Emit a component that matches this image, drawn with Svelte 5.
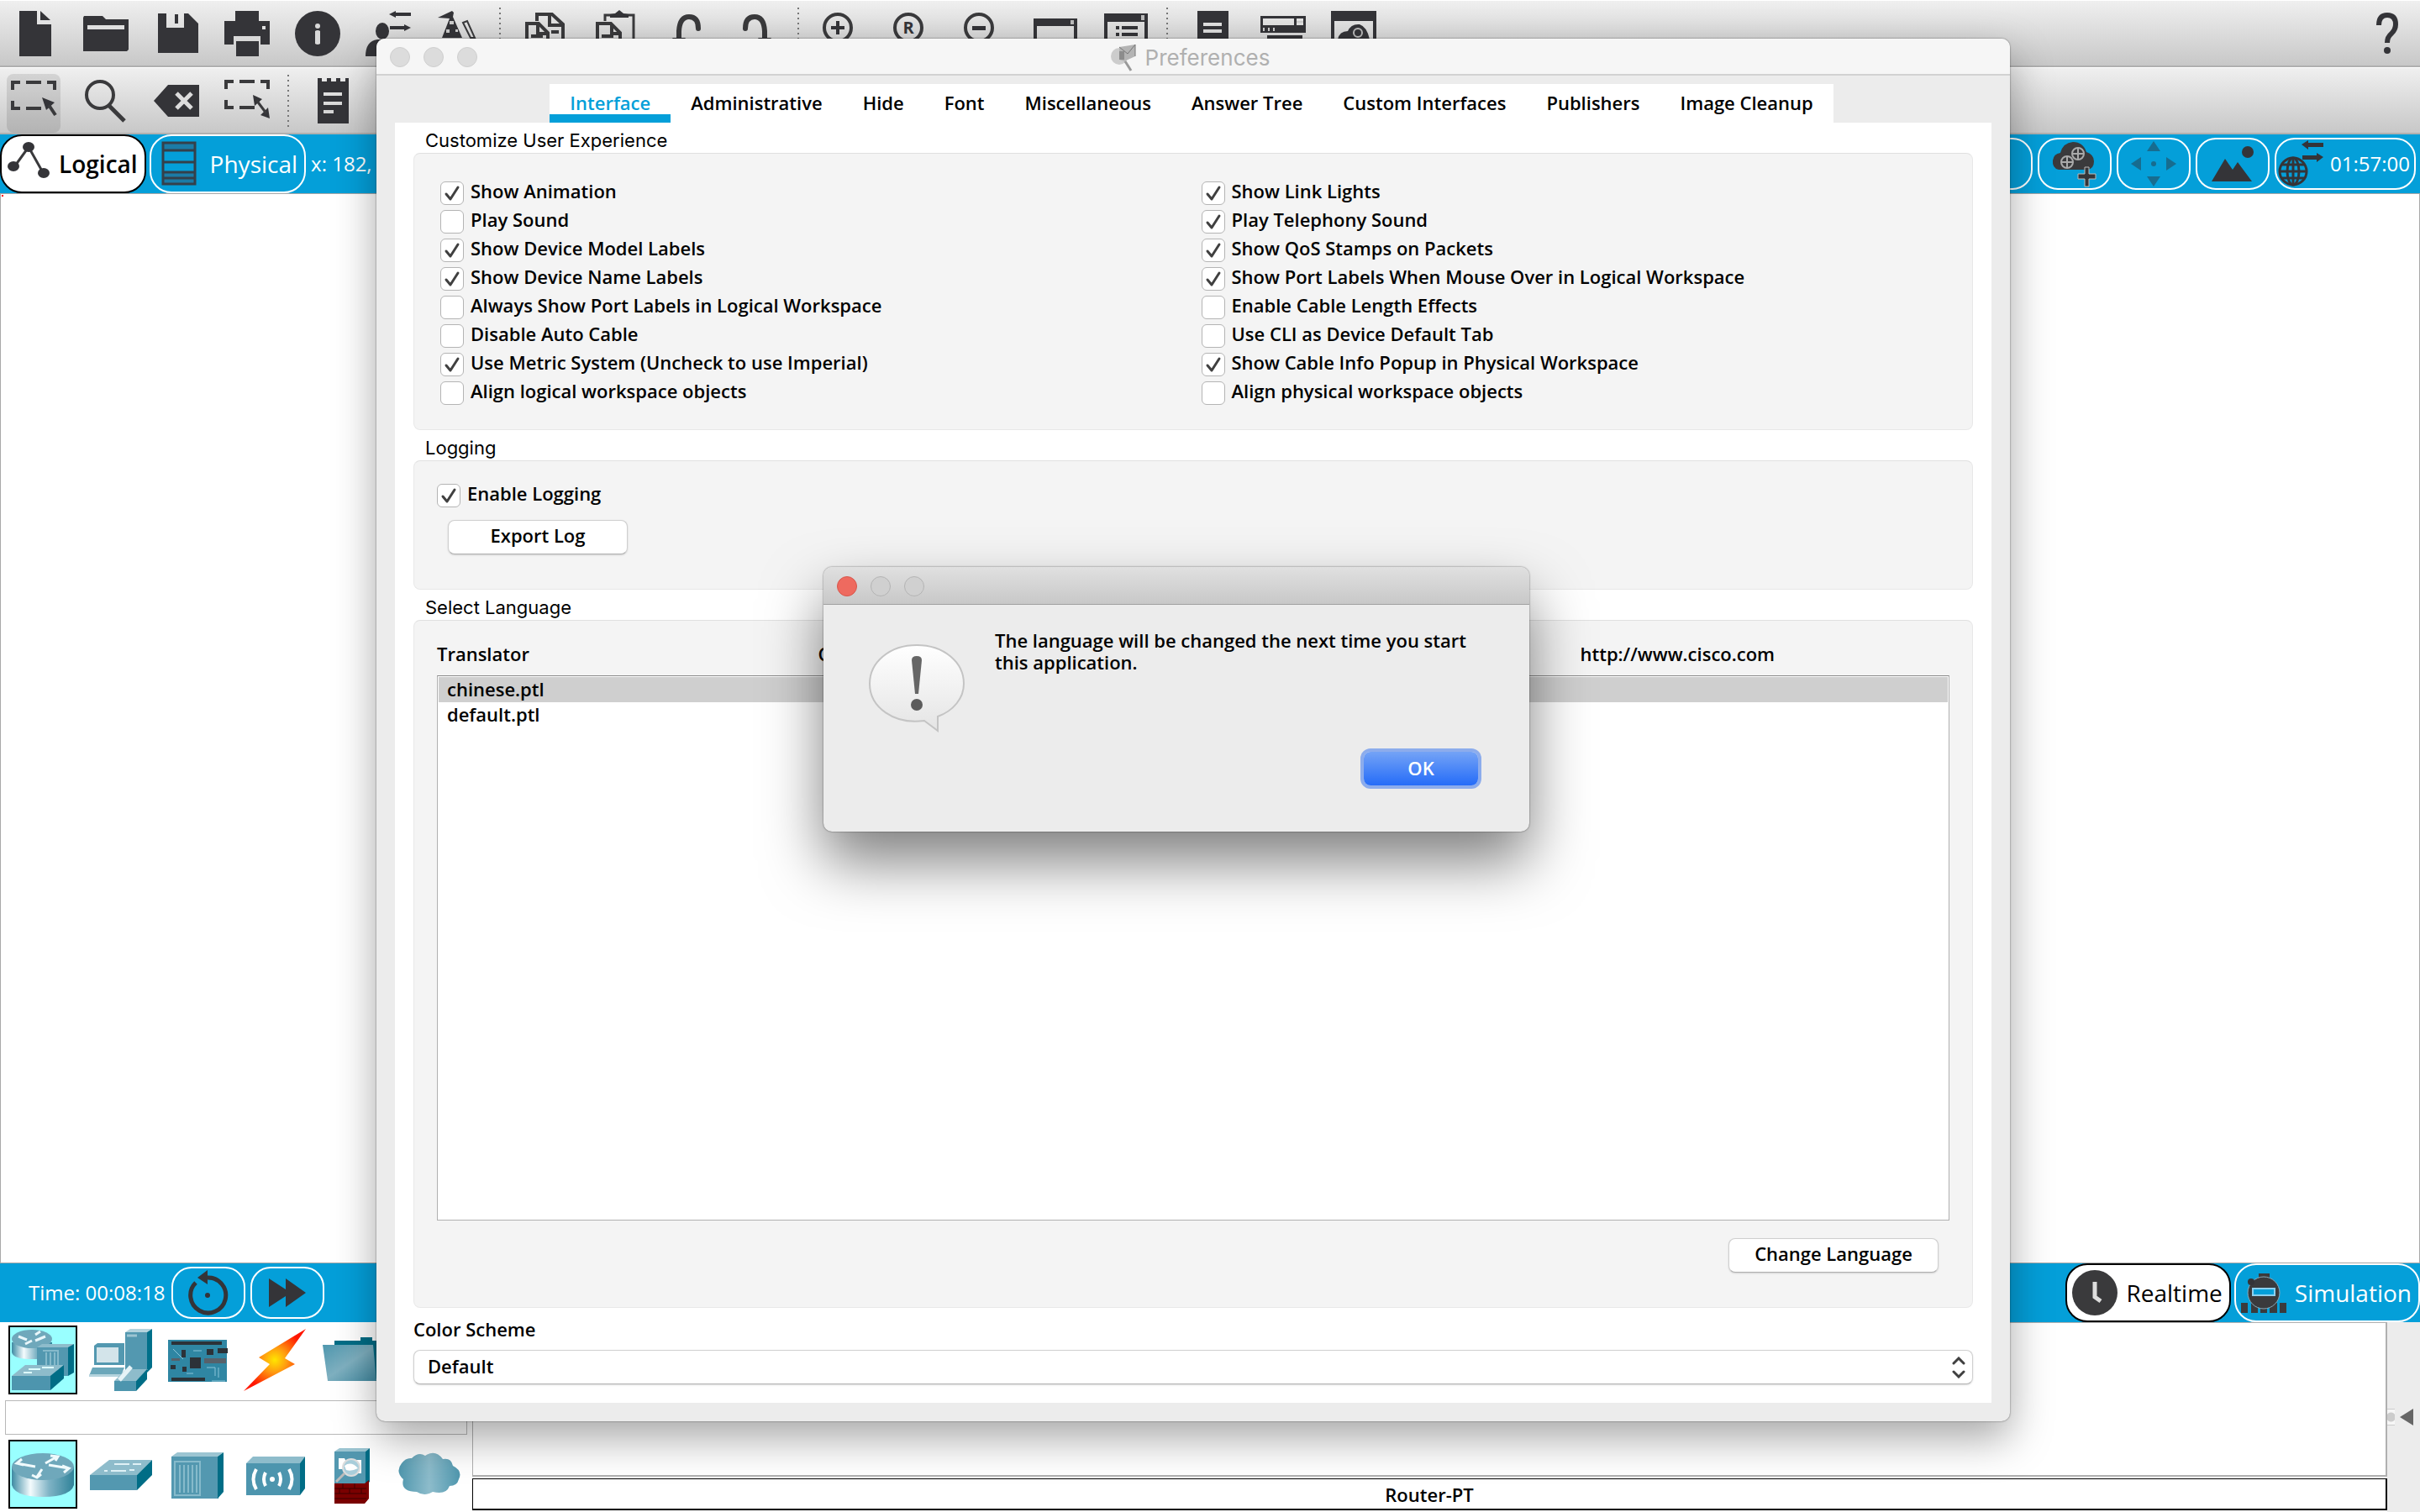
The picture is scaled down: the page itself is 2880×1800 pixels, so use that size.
<script>
	// toolbar icons, all on a 54 x 54 grid
	const icons = {
		file: '<path d="M8 0h21v16h17v38H8z"/><path d="M33 0l12 11H33z"/>',
		folder: '<path d="M0 8l1-2h22l4 4h27v36l-2 2H0zM5 17v5h44v-5z" fill-rule="evenodd"/>',
		save: '<path d="M5 3h10v17h21V3h5l12 12v35H5zM25 4h4v11h-4z"/>',
		print:
			'<path d="M13 0h28v12h13v28H43V30H11v10H0V12h13zM45 18v4h4v-4z" fill-rule="evenodd"/><path d="M14 36h27v18H14z"/>',
		info: '<circle cx="27" cy="27" r="27"/><g fill="#d8d8d8"><circle cx="27" cy="18" r="3"/><path d="M24 24q3-2 6 0v15q-3 2-6 0z"/></g>',
		users:
			'<ellipse cx="20" cy="24" rx="8" ry="10"/><path d="M0 54q0-18 14-20h12q14 2 14 20z"/><path d="M28 4l8-4v2h18v4H36v2zM54 20l-8-4v2H29v4h17v2z"/>',
		wizard:
			'<path d="M2 8l17-8 2 2-1 5 11 25H7l9-23z"/><path d="M16 12h5v4h-5zM12 22h4v4h-4zM23 22h3v3h-3z" fill="#ccc"/><path d="M32 14l5-2 9 20h-5z" fill="none" stroke="#3a3a3c" stroke-width="2"/>',
		copy: '<g fill="none" stroke="#3a3a3c" stroke-width="4"><path d="M17 12V4h18l13 12v26H30M32 4v13h14"/><path d="M5 50V15h14l11 11v24zM18 16v11h11M10 30h14M34 25h9"/></g>',
		paste:
			'<g fill="none" stroke="#3a3a3c" stroke-width="3"><path d="M14 12V5h34v40H34"/><path d="M5 50V15h16l11 11v24zM22 16v11h10M10 30h14" stroke-width="4"/></g><path d="M20 8V4l6-1 5-4 5 4 6 1v4z"/>',
		undo: '<path d="M18 44V24q1-17 12-17 11 0 11 14" fill="none" stroke="#3a3a3c" stroke-width="6" stroke-linecap="round"/><path d="M10 32h16l-8 12z"/>',
		redo: '<path d="M36 44V24Q35 7 24 7 13 7 13 21" fill="none" stroke="#3a3a3c" stroke-width="6" stroke-linecap="round"/><path d="M28 32h16l-8 12z"/>',
		zoomIn:
			'<circle cx="20" cy="20" r="16" fill="none" stroke="#3a3a3c" stroke-width="4"/><path d="M12 18h6v-6h4v6h6v4h-6v6h-4v-6h-6z"/>',
		zoomReset:
			'<circle cx="20" cy="20" r="16" fill="none" stroke="#3a3a3c" stroke-width="4"/><text x="20" y="27" font-size="20" font-weight="700" text-anchor="middle">R</text>',
		zoomOut:
			'<circle cx="20" cy="20" r="16" fill="none" stroke="#3a3a3c" stroke-width="4"/><path d="M12 18h16v5H12z"/>',
		window:
			'<path d="M1 9h52v40H1zM5 18v27h44V18z" fill-rule="evenodd"/><path d="M45 11h4v5h-4z" fill="#bbb"/>',
		list: '<path d="M1 3h52v47H1zM5 13v33h44V13z" fill-rule="evenodd"/><path d="M45 5h4v6h-4z" fill="#bbb"/><path d="M15 18h4v4h-4zM22 18h19v4H22zM15 26h4v4h-4zM22 26h19v4H22z"/>',
		note: '<path d="M9 0h37v54H9zM16 14v4h22v-4zM16 22v4h22v-4z" fill-rule="evenodd"/>',
		rack: '<path d="M0 6h54v20H0zM3 9v8h37V9zM43 9v8h8V9z" fill-rule="evenodd"/><path d="M3 20h2v4H3zM9 20h2v4H9zM15 20h2v4h-2zM43 12h8v2h-8z" fill="#ccc"/><path d="M8 29h42v8H8z"/>',
		picture:
			'<path d="M0 0h54v50H0zM4 12v34h46V12z" fill-rule="evenodd"/><path d="M8 34q2-10 12-10 4-9 14-8 9 3 12 18z"/><circle cx="32" cy="26" r="5" fill="none" stroke="#bbb" stroke-width="2"/>',
		select:
			'<path d="M2 13V4h9M18 4h18M43 4h9v9M2 26v9h9M18 35h18" fill="none" stroke="#3a3a3c" stroke-width="4"/><path d="M37 22l15 6-10 9z"/><path d="M45 31l8 12" stroke="#3a3a3c" stroke-width="4"/>',
		search:
			'<circle cx="20" cy="20" r="16" fill="none" stroke="#3a3a3c" stroke-width="4"/><path d="M31 33l18 18" stroke="#3a3a3c" stroke-width="5"/>',
		erase:
			'<path d="M0 27L17 8h37v38H17z"/><path d="M27 18l18 18M45 18L27 36" stroke="#dcdcdc" stroke-width="5"/>',
		resize:
			'<path d="M2 13V4h9M18 4h18M43 4h9v9M2 26v9h9M18 35h18" fill="none" stroke="#3a3a3c" stroke-width="4"/><path d="M34 20l11 5-9 8zM54 48l-11-4 9-9z"/><path d="M38 26l12 16" stroke="#3a3a3c" stroke-width="3"/>',
		clipboard:
			'<path d="M8 0h5v4h6V0h5v4h6V0h5v4h6V0h4v54H8zM15 17v4h22v-4zM15 28v4h22v-4zM15 38v4h12v-4z" fill-rule="evenodd"/>'
	};

	const mainTools = [
		['file', 'folder', 'save', 'print', 'info', 'users', 'wizard'],
		['copy', 'paste', 'undo', 'redo'],
		['zoomIn', 'zoomReset', 'zoomOut', 'window', 'list'],
		['note', 'rack', 'picture']
	];
	const editTools = [['select', 'search', 'erase', 'resize'], ['clipboard']];

	const tabs = [
		'Interface',
		'Administrative',
		'Hide',
		'Font',
		'Miscellaneous',
		'Answer Tree',
		'Custom Interfaces',
		'Publishers',
		'Image Cleanup'
	];
	let currentTab = $state('Interface');

	let options = $state([
		{ label: 'Show Animation', on: true },
		{ label: 'Show Link Lights', on: true },
		{ label: 'Play Sound', on: false },
		{ label: 'Play Telephony Sound', on: true },
		{ label: 'Show Device Model Labels', on: true },
		{ label: 'Show QoS Stamps on Packets', on: true },
		{ label: 'Show Device Name Labels', on: true },
		{ label: 'Show Port Labels When Mouse Over in Logical Workspace', on: true },
		{ label: 'Always Show Port Labels in Logical Workspace', on: false },
		{ label: 'Enable Cable Length Effects', on: false },
		{ label: 'Disable Auto Cable', on: false },
		{ label: 'Use CLI as Device Default Tab', on: false },
		{ label: 'Use Metric System (Uncheck to use Imperial)', on: true },
		{ label: 'Show Cable Info Popup in Physical Workspace', on: true },
		{ label: 'Align logical workspace objects', on: false },
		{ label: 'Align physical workspace objects', on: false }
	]);
	let logging = $state(true);

	const languages = ['chinese.ptl', 'default.ptl'];
	let language = $state('chinese.ptl');
	let scheme = $state('Default');
	let alertOpen = $state(true);
</script>

{#snippet toolbar(groups, active)}
	{#each groups as group, i}
		{#if i > 0}<span class="sep"></span>{/if}
		{#each group as name}
			<button class="tool" class:active={name === active} aria-label={name}>
				<svg viewBox="0 0 54 54" width="54" height="54">{@html icons[name]}</svg>
			</button>
		{/each}
	{/each}
{/snippet}

<svg width="0" height="0" class="defs" aria-hidden="true">
	<defs>
		<linearGradient id="metal">
			<stop offset="0" stop-color="#3d8aa3" />
			<stop offset="0.3" stop-color="#f4fbfd" />
			<stop offset="0.6" stop-color="#7fb3c5" />
			<stop offset="1" stop-color="#2f8299" />
		</linearGradient>
		<linearGradient id="soft">
			<stop offset="0" stop-color="#4f97ae" />
			<stop offset="0.5" stop-color="#8dbccb" />
			<stop offset="1" stop-color="#4f97ae" />
		</linearGradient>
		<linearGradient id="slope" x2="1" y2="1">
			<stop offset="0" stop-color="#4f97ae" />
			<stop offset="0.5" stop-color="#7fb0c0" />
			<stop offset="1" stop-color="#4089a0" />
		</linearGradient>
		<radialGradient id="spark">
			<stop offset="0" stop-color="#ffe600" />
			<stop offset="0.4" stop-color="#ff9a10" />
			<stop offset="1" stop-color="#ff1500" />
		</radialGradient>
		<linearGradient id="bubble" x2="0" y2="1">
			<stop offset="0" stop-color="#fff" />
			<stop offset="1" stop-color="#e4e4e4" />
		</linearGradient>
	</defs>
</svg>

<div class="desktop">
	<header class="toolbar">
		{@render toolbar(mainTools, '')}
		<button class="tool help" aria-label="help">
			<svg viewBox="0 0 54 54" width="54" height="54">
				<path d="M17 17q0-12 10-12t10 11q0 6-5 11-5 4-5 11" fill="none" stroke="#343438" stroke-width="6" />
				<circle cx="27" cy="47" r="4" />
			</svg>
		</button>
	</header>
	<div class="toolbar">{@render toolbar(editTools, 'select')}</div>

	<nav class="bluebar">
		<button class="mode on logical">
			<svg viewBox="0 0 52 54" width="52" height="54">
				<path d="M8 32L26 7 44 39" fill="none" stroke="#3a3a3c" stroke-width="3" />
				<ellipse cx="26" cy="7" rx="7" ry="6" /><ellipse cx="8" cy="30" rx="7" ry="6" /><ellipse cx="44" cy="38" rx="7" ry="6" />
			</svg>
			Logical
		</button>
		<button class="mode physical">
			<svg viewBox="0 0 42 54" width="42" height="54">
				<path d="M2 2h38v9H2zM2 37h38v14H2z" fill="#1b7ba6" />
				<path d="M2 2h38v49H2zM2 11h38M2 25h38M2 37h38M2 44h38" fill="none" stroke="#34404a" stroke-width="3" />
			</svg>
			Physical
		</button>
		<span class="coords">x: 182, y: 241</span>
		<div class="right">
			<button class="pill" aria-label="undo layer">
				<svg viewBox="0 0 54 54" width="54" height="54">
					<circle cx="22" cy="32" r="16" fill="none" stroke="#086a94" stroke-width="4" />
				</svg>
			</button>
			<button class="pill" aria-label="new cluster">
				<svg viewBox="0 0 54 54" width="54" height="54">
					<path d="M8 34Q0 32 1 23q1-8 9-9Q13 2 25 1q12 0 16 12 9 3 9 11 0 9-8 10z" fill="#3a3a3c" />
					<g fill="none" stroke="#aaa" stroke-width="2">
						<circle cx="31" cy="15" r="7" /><path d="M24 15h14M31 8v14" />
						<circle cx="18" cy="25" r="7" /><path d="M11 25h14M18 18v14" />
					</g>
					<path d="M39 31h5v8h8v6h-8v9h-5v-9h-8v-6h8z" stroke="#bbb" />
				</svg>
			</button>
			<button class="pill" aria-label="move object">
				<svg viewBox="0 0 54 54" width="54" height="54">
					<path d="M19 12l8-12 8 12zM19 42l8 12 8-12zM12 19v16L0 27zM42 19v16l12-8z" fill="#176c8f" />
					<circle cx="27" cy="27" r="3" fill="#176c8f" />
				</svg>
			</button>
			<button class="pill" aria-label="set background">
				<svg viewBox="0 0 54 54" width="54" height="54">
					<path d="M2 48L18 21l9 13 6-9 17 23z" /><circle cx="45" cy="13" r="7" />
				</svg>
			</button>
			<button class="pill clock">
				<svg viewBox="0 0 54 54" width="54" height="54">
					<g fill="none" stroke="#343438" stroke-width="3">
						<circle cx="18" cy="36" r="16" /><ellipse cx="18" cy="36" rx="7" ry="16" />
						<path d="M2 36h32M4 28h28M4 44h28M18 20v32" />
					</g>
					<path d="M28 4l8-5v3h18v5H36v3zM54 19l-8-5v3H29v5h17v3z" />
				</svg>
				01:57:00
			</button>
		</div>
	</nav>

	<main class="workspace"></main>

	<div class="bluebar">
		<span class="time">Time: 00:08:18</span>
		<button class="pill" aria-label="power cycle devices">
			<svg viewBox="0 0 54 54" width="54" height="54">
				<path d="M12 15A21 21 0 1 0 26 9" fill="none" stroke="#343438" stroke-width="5" />
				<path d="M14 9L26 0v17z" /><circle cx="26" cy="30" r="3" />
			</svg>
		</button>
		<button class="pill" aria-label="fast forward">
			<svg viewBox="0 0 54 54" width="54" height="54"><path d="M5 10l20 13V10l24 17-24 17V31L5 44z" /></svg>
		</button>
		<div class="right modes">
			<button class="mode on">
				<svg viewBox="0 0 54 54" width="54" height="54">
					<circle cx="27" cy="27" r="27" fill="#3a3a3c" />
					<path d="M27 14v18l7 5" fill="none" stroke="#ddd" stroke-width="5" />
				</svg>
				Realtime
			</button>
			<button class="mode">
				<svg viewBox="0 0 54 54" width="54" height="54">
					<path d="M21 4h13v6H21zM0 39h54v12H0z" fill="#3a3a3c" />
					<path d="M8 39v12h4V39zM20 39v12h3V39zM31 39v12h3V39zM43 39v12h3V39z" fill="#049fd9" />
					<circle cx="27" cy="27" r="19" fill="#3a3a3c" stroke="#8ab" /><circle cx="12" cy="14" r="4" />
					<path d="M14 22h26v8H14z" fill="#049fd9" stroke="#8cd0ee" stroke-width="2" />
				</svg>
				Simulation
			</button>
		</div>
	</div>

	<footer>
		<section class="devices">
			<div class="tiles">
				<button class="tile picked" aria-label="Network Devices">
					<svg viewBox="0 0 78 78" width="78" height="78">
						<path d="M2 18v12q2 8 24 8t24-8V18z" fill="url(#metal)" />
						<ellipse cx="26" cy="14" rx="24" ry="11" fill="#6fa8bb" />
						<path d="M10 11l10 4M42 11l-12 5M18 20l8-4M30 9l6-4" stroke="#e8f6fa" stroke-width="3" />
						<path d="M32 24l6-4h38l-5 4z" fill="#8ebccb" /><path d="M32 24h37v34H32z" fill="#5398b0" />
						<path d="M69 24l7-4v34l-7 4z" fill="#006d86" />
						<path d="M39 28h18v28M43 30v20M48 30v20M53 30v20" fill="none" stroke="#86bacb" stroke-width="2" />
						<path d="M2 58l16-13h46L48 58z" fill="#8ebccb" /><path d="M2 58h46v17H2z" fill="#4d95ae" />
						<path d="M48 58l16-13v16L48 75z" fill="#006d86" /><path d="M22 50h14M38 48h14M16 54h10" stroke="#dff" stroke-width="2" />
					</svg>
				</button>
				<button class="tile" aria-label="End Devices">
					<svg viewBox="0 0 78 78" width="78" height="78">
						<path d="M45 6l6-4h26l-6 4z" fill="#b4d3dd" /><path d="M45 6h26v46H45z" fill="#5398b0" />
						<path d="M71 6l6-4v46l-6 6z" fill="#00708a" /><path d="M47 10h12" stroke="#9cc5d2" stroke-width="3" />
						<path d="M8 22l4-3h32v26H8z" fill="#5398b0" /><path d="M11 24h26v18H11z" fill="#d3e4ea" />
						<path d="M6 48h38l-4 10H2z" fill="#6ba7ba" /><path d="M2 56h40v3H2z" fill="#b4d3dd" />
						<path d="M32 64l14-14h26L58 64z" fill="#8ebccb" /><path d="M32 64h26v12H32z" fill="#4d95ae" />
						<path d="M58 64l13-14v12L58 76z" fill="#006d86" /><path d="M38 63l14-16" stroke="#e6f3f7" stroke-width="5" />
					</svg>
				</button>
				<button class="tile" aria-label="Components">
					<svg viewBox="0 0 78 78" width="78" height="78">
						<path d="M4 15h70v50H4z" fill="#2f86a3" />
						<path d="M8 17h60v4H8zM8 60h40v4H8zM30 36h13v13H30zM50 26h8v7h-8zM63 25h12v6H63zM21 47h5v6h-5zM7 45h6v5H7zM20 27h5v9h-5z" fill="#2c3238" />
						<path d="M47 37h26v6H47zM8 37h10v3H8z" fill="#57616a" />
						<path d="M10 26l12 12M34 28h10M50 48h10v10M64 48v12M56 64h16M26 55h8" fill="none" stroke="#8bc4d8" stroke-width="1" />
					</svg>
				</button>
				<button class="tile" aria-label="Connections">
					<svg viewBox="0 0 78 78" width="78" height="78"><path d="M76 2L20 36l13 8L2 76l61-32-12-7z" fill="url(#spark)" /></svg>
				</button>
				<button class="tile" aria-label="Miscellaneous">
					<svg viewBox="0 0 78 78" width="78" height="78">
						<path d="M18 22v-6h31v-4h14v4h8v44l-8 4z" fill="#006d86" /><path d="M4 21h60l4 43H10z" fill="url(#slope)" />
					</svg>
				</button>
			</div>
			<input class="filter" type="text" aria-label="Device filter" />
			<div class="tiles">
				<button class="tile picked" aria-label="Routers">
					<svg viewBox="0 0 78 78" width="78" height="78">
						<path d="M2 30v22q4 14 37 14t37-14V30z" fill="url(#metal)" />
						<ellipse cx="39" cy="30" rx="37" ry="16" fill="#6fa8bb" />
						<path d="M8 26l22 4M14 21l-6 5 8 2M70 32l-24-4M64 37l6-5-8-3M32 42l6-9M26 40l6 3 5-4M42 26l14-8M48 17l9 1-3 5" fill="none" stroke="#f0fafc" stroke-width="3" />
					</svg>
				</button>
				<button class="tile" aria-label="Switches">
					<svg viewBox="0 0 78 78" width="78" height="78">
						<path d="M3 40l23-18h51L59 40z" fill="#8ebccb" /><path d="M3 40h56v18H3z" fill="#5398b0" />
						<path d="M59 40l18-18v18L59 58z" fill="#006d86" /><path d="M32 27h18M28 35h18M54 27h10M20 35h4M50 34h6" stroke="#dff1f6" stroke-width="2" />
					</svg>
				</button>
				<button class="tile" aria-label="Hubs">
					<svg viewBox="0 0 78 78" width="78" height="78">
						<path d="M8 18l7-5h55l-7 5z" fill="#9cc5d2" /><path d="M8 18h56v50H8z" fill="#5398b0" /><path d="M63 18l7-5v47l-7 8z" fill="#006d86" />
						<path d="M12 24h30v40H12zM18 28v33M23 28v33M28 28v33M33 28v33M38 28v33" fill="none" stroke="#86bacb" stroke-width="2" />
					</svg>
				</button>
				<button class="tile" aria-label="Wireless Devices">
					<svg viewBox="0 0 78 78" width="78" height="78">
						<path d="M5 26l8-8h62l-6 8z" fill="#8ebccb" /><path d="M5 26h64v38H5z" fill="#4d95ae" /><path d="M69 26l6-8v38l-6 8z" fill="#006d86" />
						<g fill="none" stroke="#fff" stroke-width="4"><path d="M17 33q-7 12 0 24M28 37q-4 8 0 16M44 37q4 8 0 16M56 33q7 12 0 24" /></g>
						<circle cx="36" cy="45" r="3" fill="#fff" />
					</svg>
				</button>
				<button class="tile" aria-label="Security">
					<svg viewBox="0 0 78 78" width="78" height="78">
						<path d="M18 12l6-4h36l-5 4z" fill="#9cc5d2" /><path d="M18 12h37v40H18z" fill="#5398b0" /><path d="M55 12l5-4v40l-5 4z" fill="#006d86" />
						<path d="M18 50h36l5-4v22l-5 6H18z" fill="#7a0000" /><path d="M18 56h38M18 62h38M18 68h38M28 50v6M42 50v6M24 56v6M36 56v6M50 56v6" stroke="#3c0000" />
						<path d="M23 20h7l4 8-4 5h-7zM40 22h10v16H38z" fill="#fff" /><circle cx="38" cy="31" r="10" fill="#a9cedb" stroke="#ddd" stroke-width="2" />
						<path d="M30 29q8-6 16 3-8 4-14 2z" fill="#fff" /><path d="M30 38L20 48" stroke="#bbb" stroke-width="3" />
					</svg>
				</button>
				<button class="tile" aria-label="WAN Emulation">
					<svg viewBox="0 0 78 78" width="78" height="78">
						<path d="M24 60Q4 60 8 45-2 36 6 26q5-7 12-6 8-8 16-3 12-8 21 4 10-2 12 8 12 6 7 16-2 8-11 8-4 11-20 7-10 6-19 0z" fill="url(#soft)" />
					</svg>
				</button>
			</div>
		</section>
		<section class="models">
			<div class="model-list"></div>
			<div class="model-name">Router-PT</div>
		</section>
		<aside class="drawer">
			<span class="knob"></span>
			<svg viewBox="0 0 16 20" width="16" height="20"><path d="M16 0v20L0 10z" fill="#666" /></svg>
		</aside>
	</footer>

	<section class="prefs" aria-label="Preferences">
		<div class="titlebar">
			<span class="lights"><i></i><i></i><i></i></span>
			<h1>
				<svg viewBox="0 0 32 32" width="32" height="32">
					<circle cx="11" cy="14" r="10" fill="#ccc" />
					<path d="M11 3l19-3v14l-13 6-6-2z" fill="#b4b4b4" /><path d="M11 3l10 8 9-11v14" fill="none" stroke="#777" />
					<path d="M11 8h6v10h-6z" fill="#8c8c8c" /><path d="M18 20l7 11" stroke="#999" stroke-width="3" />
				</svg>
				Preferences
			</h1>
		</div>

		<div class="prefs-body">
			<div class="tabs" role="tablist">
				{#each tabs as tab}
					<button
						role="tab"
						aria-selected={currentTab === tab}
						class:current={currentTab === tab}
						onclick={() => (currentTab = tab)}>{tab}</button
					>
				{/each}
			</div>

			<div class="page">
				<h2>Customize User Experience</h2>
				<div class="group options">
					{#each options as option}
						<label><input type="checkbox" bind:checked={option.on} />{option.label}</label>
					{/each}
				</div>

				<h2>Logging</h2>
				<div class="group logging">
					<label><input type="checkbox" bind:checked={logging} />Enable Logging</label>
					<button class="push export">Export Log</button>
				</div>

				<h2>Select Language</h2>
				<div class="group language">
					<div class="heads">
						<span>Translator</span>
						<span>Cisco</span>
						<span></span>
						<span>http://www.cisco.com</span>
					</div>
					<div class="files" role="listbox" aria-label="Select Language">
						{#each languages as item}
							<button
								role="option"
								aria-selected={language === item}
								class:chosen={language === item}
								onclick={() => (language = item)}>{item}</button
							>
						{/each}
					</div>
					<button class="push change" onclick={() => (alertOpen = true)}>Change Language</button>
				</div>

				<label class="scheme-label" for="scheme">Color Scheme</label>
				<select id="scheme" bind:value={scheme}>
					<option>Default</option>
				</select>
			</div>
		</div>
	</section>

	{#if alertOpen}
		<div class="alert" role="alertdialog" aria-labelledby="message">
			<div class="titlebar dark">
				<span class="lights"><i class="red"></i><i></i><i></i></span>
			</div>
			<div class="alert-body">
				<svg viewBox="0 0 116 108" width="116" height="108">
					<path
						d="M57 2c32 0 56 20 56 46 0 17-12 32-31 39v17l-16-12c-36 5-65-16-65-44C1 22 25 2 57 2z"
						fill="url(#bubble)"
						stroke="#c4c4c4"
						stroke-width="2"
					/>
					<path d="M51 20q0-5 6-5t6 5l-4 40h-4z" fill="#666" /><circle cx="57" cy="73" r="7" fill="#5c5c5c" />
				</svg>
				<div class="alert-text">
					<p id="message">The language will be changed the next time you start this application.</p>
					<button class="ok" onclick={() => (alertOpen = false)}>OK</button>
				</div>
			</div>
		</div>
	{/if}
</div>

<style>
	:global(body) {
		margin: 0;
	}

	.desktop,
	.desktop * {
		box-sizing: border-box;
	}

	.defs {
		position: absolute;
	}

	.desktop {
		position: relative;
		display: flex;
		flex-direction: column;
		height: 100vh;
		overflow: hidden;
		background: #fff;
		font-family: 'Open Sans', 'Noto Sans', sans-serif;
		font-size: 22px;
		font-weight: 600;
		line-height: 26px;
		color: #000;
	}

	button,
	input,
	select {
		margin: 0;
		padding: 0;
		border: 0;
		background: none;
		font: inherit;
		color: inherit;
	}

	svg {
		display: block;
		flex: none;
		overflow: visible;
		fill: #343438;
	}

	/* toolbars */
	.toolbar {
		display: flex;
		align-items: center;
		height: 80px;
		flex: none;
		border-top: 1px solid #fff;
		border-bottom: 2px solid #b0b0b0;
		background: linear-gradient(#efefef, #c8c8c8);
	}

	.tool {
		display: grid;
		place-items: center;
		width: 84px;
		height: 76px;
	}

	.tool.active {
		width: 64px;
		height: 70px;
		margin: 0 12px 0 8px;
		align-self: flex-end;
		padding-bottom: 4px;
		border-radius: 8px;
		background: rgba(0, 0, 0, 0.1);
	}

	.help {
		margin-left: auto;
		margin-right: -3px;
	}

	.sep {
		width: 14px;
		height: 70px;
		margin-right: 5px;
		background: radial-gradient(circle, #777 1px, transparent 1px) center / 14px 6px repeat-y;
	}

	.bluebar {
		display: flex;
		align-items: center;
		height: 70px;
		flex: none;
		background: #049fd9;
		color: #fff;
	}

	.mode {
		display: flex;
		align-items: center;
		gap: 10px;
		height: 70px;
		padding: 0 8px 0 6px;
		border: 2px solid #fff;
		border-radius: 26px;
		font-size: 28px;
		font-weight: 500;
	}

	.mode.on {
		background: #fff;
		color: #000;
		border-color: #000;
	}

	.logical {
		font-weight: 600;
	}

	.physical {
		gap: 16px;
		padding-left: 12px;
		margin: 0 6px 0 4px;
	}

	.right {
		display: flex;
		gap: 6px;
		margin-left: auto;
		padding-right: 5px;
	}

	.modes {
		padding-right: 0;
		gap: 4px;
	}

	.pill {
		display: grid;
		place-items: center;
		width: 88px;
		height: 62px;
		border: 2px solid #fff;
		border-radius: 24px;
	}

	.pill.clock {
		display: flex;
		align-items: center;
		gap: 8px;
		width: 168px;
		padding: 0 2px;
	}

	.clock,
	.time,
	.coords {
		font-size: 24px;
		font-weight: 500;
	}

	.time {
		padding: 0 8px 0 34px;
	}

	.bluebar > .pill {
		margin-right: 6px;
	}

	/* the red mark sits on the canvas origin */
	.workspace {
		flex: 1;
		border: 1px solid #a8a8a8;
		background: #fff linear-gradient(#f00, #f00) 1px 1px / 2px 2px no-repeat;
	}

	/* bottom device picker */
	footer {
		display: flex;
		height: 226px;
		flex: none;
		background: #fff;
	}

	.devices {
		width: 562px;
		padding: 4px 6px;
	}

	.tiles {
		display: flex;
		gap: 10px;
		padding-left: 4px;
	}

	.tile {
		display: grid;
		place-items: center;
		width: 82px;
		height: 82px;
		flex: none;
	}

	.picked {
		border: 2px solid #000;
		background: #9ff;
	}

	.filter {
		width: 100%;
		height: 41px;
		margin: 7px 0 6px;
		border: 1px solid #b8b8b8;
		display: block;
	}

	.models {
		flex: 1;
		display: flex;
		flex-direction: column;
		gap: 2px;
		padding-bottom: 2px;
	}

	.model-list {
		flex: 1;
		border: 1px solid #b0b0b0;
		border-width: 1px 2px 2px 1px;
	}

	.model-name {
		height: 38px;
		border: 1px solid #000;
		border-width: 1px 2px 2px 1px;
		line-height: 36px;
		text-align: center;
	}

	.drawer {
		display: flex;
		align-items: center;
		gap: 6px;
		width: 39px;
		background: #ececec;
	}

	.knob {
		width: 9px;
		height: 20px;
		border: 1px solid #ccc;
		border-width: 1px 0;
		background: radial-gradient(circle, #ccc 5px, #f6f6f6 6px);
	}

	/* preferences window */
	.prefs {
		position: absolute;
		inset: 46px 488px 108px 448px;
		display: flex;
		flex-direction: column;
		border-radius: 10px;
		background: #ececec;
		box-shadow:
			0 0 2px rgba(0, 0, 0, 0.6),
			0 20px 50px rgba(0, 0, 0, 0.35);
	}

	.titlebar {
		display: flex;
		align-items: center;
		height: 44px;
		padding: 2px 16px 0;
		border-bottom: 2px solid #d2d2d2;
		border-radius: 10px 10px 0 0;
		background: #f6f6f6;
	}

	.lights {
		display: flex;
		gap: 16px;
	}

	.lights i {
		width: 24px;
		height: 24px;
		border: 1px solid #cfcfcf;
		border-radius: 50%;
		background: #dcdcdc;
	}

	h1 {
		display: flex;
		align-items: center;
		gap: 10px;
		margin: 0 auto;
		padding-top: 2px;
		padding-right: 112px;
		font: 400 26px/32px Inter, sans-serif;
		color: #b0b0b0;
	}

	.prefs-body {
		flex: 1;
		display: flex;
		flex-direction: column;
		padding: 10px 22px 22px;
	}

	.tabs {
		display: flex;
		align-self: center;
		margin-right: 4px;
		background: #fff;
	}

	.tabs button {
		height: 46px;
		padding: 8px 24px 0;
		border-bottom: 10px solid transparent;
	}

	.tabs .current {
		border-color: #049fd9;
		color: #049fd9;
	}

	.page {
		flex: 1;
		display: flex;
		flex-direction: column;
		padding: 0 22px 22px;
		background: #fff;
	}

	h2 {
		margin: 0;
		padding: 8px 14px 2px;
		font: 400 22px/26px Inter, sans-serif;
	}

	.group {
		border: 1px solid #e8e8e8;
		border-top-color: #e0e0e0;
		border-radius: 8px;
		background: #f4f4f4;
	}

	.options {
		display: grid;
		grid-template-columns: 1fr 1fr;
		padding: 30px 12px 26px 31px;
	}

	.group label {
		display: flex;
		align-items: flex-start;
		gap: 8px;
		height: 34px;
		line-height: 28px;
	}

	input[type='checkbox'] {
		appearance: none;
		width: 28px;
		height: 28px;
		margin-top: 3px;
		border: 1px solid #b4b4b4;
		border-radius: 6px;
		background: #fff;
	}

	input[type='checkbox']:checked {
		background: #fff
			url("data:image/svg+xml,%3Csvg xmlns='http://www.w3.org/2000/svg' viewBox='0 0 26 26'%3E%3Cpath d='M6 14l5 6 9-14' fill='none' stroke='%23404040' stroke-width='3' stroke-linecap='round' stroke-linejoin='round'/%3E%3C/svg%3E");
	}

	.logging {
		padding: 24px 27px 41px;
	}

	.push {
		height: 41px;
		padding: 0 20px 5px;
		border: 1px solid #cfcfcf;
		border-bottom-color: #b0b0b0;
		border-radius: 8px;
		background: #fff;
		box-shadow: 0 1px 2px rgba(0, 0, 0, 0.15);
	}

	.export {
		display: block;
		width: 214px;
		margin: 12px 0 0 13px;
	}

	.language {
		flex: 1;
		display: flex;
		flex-direction: column;
		padding: 26px 27px 41px;
	}

	.heads {
		display: grid;
		grid-template-columns: repeat(4, 1fr);
		gap: 14px;
		margin-bottom: 13px;
	}

	.files {
		flex: 1;
		display: flex;
		flex-direction: column;
		border: 1px solid #b0b0b0;
		border-top-color: #888;
		background: #fff;
		padding: 1px;
	}

	.files button {
		height: 30px;
		padding: 0 10px 2px;
		text-align: left;
	}

	.files .chosen {
		background: #cfcfcf;
	}

	.change {
		align-self: flex-end;
		width: 250px;
		margin: 21px 13px 0 0;
	}

	.scheme-label {
		padding: 12px 0;
	}

	select {
		appearance: none;
		height: 41px;
		padding: 0 16px 4px;
		border: 1px solid #d0d0d0;
		border-bottom-color: #b4b4b4;
		border-radius: 8px;
		box-shadow: 0 1px 2px rgba(0, 0, 0, 0.15);
		background: #fff
			url("data:image/svg+xml,%3Csvg xmlns='http://www.w3.org/2000/svg' width='18' height='26' viewBox='0 0 18 26'%3E%3Cpath d='M3 8l6-6 6 6M3 18l6 6 6-6' fill='none' stroke='%23404040' stroke-width='3' stroke-linecap='round'/%3E%3C/svg%3E")
			no-repeat right 7px center;
	}

	/* message box */
	.alert {
		position: absolute;
		top: 675px;
		left: 980px;
		width: 840px;
		border-radius: 10px;
		background: #ececec;
		box-shadow:
			0 0 2px rgba(0, 0, 0, 0.6),
			0 36px 70px rgba(0, 0, 0, 0.5);
	}

	.titlebar.dark {
		height: 45px;
		background: linear-gradient(#e0e0e0, #c8c8c8);
		border-bottom: 1px solid #a0a0a0;
	}

	.dark i {
		background: #d0d0d0;
		border-color: #b4b4b4;
	}

	.dark .red {
		background: #ee6a5f;
		border-color: #d8564c;
	}

	.alert-body {
		display: flex;
		align-items: flex-start;
		gap: 34px;
		padding: 46px 58px 55px 54px;
	}

	.alert-text {
		flex: 1;
		display: flex;
		flex-direction: column;
		align-items: flex-end;
		margin-top: -17px;
	}

	.alert-text p {
		width: 100%;
		margin: 0 0 94px;
	}

	.ok {
		width: 136px;
		height: 40px;
		margin: 0 3px;
		padding-bottom: 3px;
		border-radius: 8px;
		background: linear-gradient(#74a3f6, #256cf8);
		box-shadow: 0 0 0 4px #8cacec;
		color: #fff;
	}
</style>
